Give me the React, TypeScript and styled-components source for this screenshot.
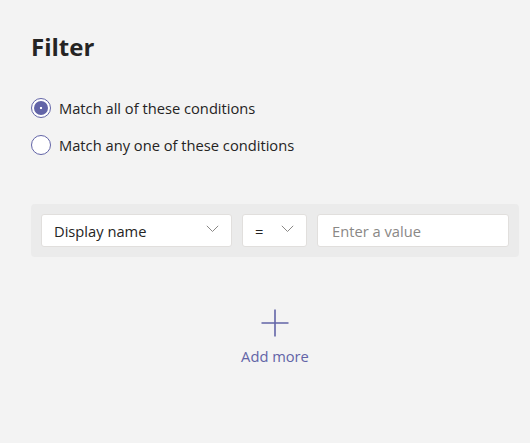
import React, { useState } from "react";
import styled, { createGlobalStyle } from "styled-components";

const GlobalStyle = createGlobalStyle`
  html, body {
    margin: 0;
    padding: 0;
    background: #f3f3f3;
  }
  body {
    font-family: "Open Sans", "Noto Sans", Arial, sans-serif;
    color: #252423;
  }
`;

function Chevron() {
  return (
    <svg width="13" height="8" viewBox="0 0 13 8">
      <path d="M0.8 0.8 L6.5 6.5 L12.2 0.8" fill="none" stroke="#8a8886" strokeWidth="1" />
    </svg>
  );
}

function Plus() {
  return (
    <svg width="28" height="28" viewBox="0 0 28 28">
      <path d="M14 0.5 V27.5 M0.5 14 H27.5" stroke="#6264a7" strokeWidth="1.6" />
    </svg>
  );
}

export default function App() {
  const [mode, setMode] = useState("all");

  return (
    <Page>
      <GlobalStyle />
      <Title>Filter</Title>

      <RadioGroup>
        <RadioRow onClick={() => setMode("all")}>
          <Radio checked={mode === "all"} />
          <span>Match all of these conditions</span>
        </RadioRow>
        <RadioRow onClick={() => setMode("any")}>
          <Radio checked={mode === "any"} />
          <span>Match any one of these conditions</span>
        </RadioRow>
      </RadioGroup>

      <ConditionRow>
        <Select width={191}>
          <span>Display name</span>
          <Chevron />
        </Select>
        <Select width={65}>
          <span>=</span>
          <Chevron />
        </Select>
        <ValueInput placeholder="Enter a value" />
      </ConditionRow>

      <AddMore>
        <Plus />
        <span>Add more</span>
      </AddMore>
    </Page>
  );
}

const Page = styled.div`
  width: 530px;
  height: 443px;
  box-sizing: border-box;
  padding: 30px 11px 0 31px;
  display: flex;
  flex-direction: column;
`;

const Title = styled.h1`
  margin: 0;
  font-size: 24px;
  font-weight: 700;
  line-height: 34px;
  color: #252423;
`;

const RadioGroup = styled.div`
  margin-top: 34px;
  display: flex;
  flex-direction: column;
  gap: 17px;
`;

const RadioRow = styled.label`
  display: flex;
  align-items: center;
  gap: 8px;
  font-size: 14.7px;
  line-height: 20px;
  color: #252423;
  cursor: pointer;
`;

const Radio = styled.span<{ checked: boolean }>`
  width: 20px;
  height: 20px;
  box-sizing: border-box;
  border-radius: 50%;
  border: 1px solid #6264a7;
  background: #ffffff;
  display: flex;
  align-items: center;
  justify-content: center;

  &::after {
    content: "";
    display: ${(props) => (props.checked ? "block" : "none")};
    width: 14px;
    height: 14px;
    border-radius: 50%;
    background: radial-gradient(circle, #ffffff 0 1px, #6264a7 1.6px);
  }
`;

const ConditionRow = styled.div`
  margin-top: 49px;
  background: #ebebeb;
  border-radius: 4px;
  padding: 10px;
  display: flex;
  gap: 10px;
`;

const Select = styled.div<{ width: number }>`
  width: ${(props) => props.width}px;
  height: 33px;
  box-sizing: border-box;
  flex-shrink: 0;
  background: #ffffff;
  border: 1px solid #e1dfdd;
  border-radius: 3px;
  padding: 0 12px 0 12px;
  display: flex;
  align-items: center;
  justify-content: space-between;
  font-size: 14.7px;
  color: #252423;

  svg {
    margin-top: -3px;
  }
`;

const ValueInput = styled.input`
  flex: 1;
  min-width: 0;
  height: 33px;
  box-sizing: border-box;
  background: #ffffff;
  border: 1px solid #e1dfdd;
  border-radius: 3px;
  padding: 0 14px;
  font-family: inherit;
  font-size: 14.7px;
  color: #252423;
  outline: none;

  &::placeholder {
    color: #8a8886;
  }
`;

const AddMore = styled.div`
  margin-top: 52px;
  align-self: center;
  display: flex;
  flex-direction: column;
  align-items: center;
  gap: 9px;
  color: #6264a7;
  font-size: 14.7px;
  cursor: pointer;
`;
